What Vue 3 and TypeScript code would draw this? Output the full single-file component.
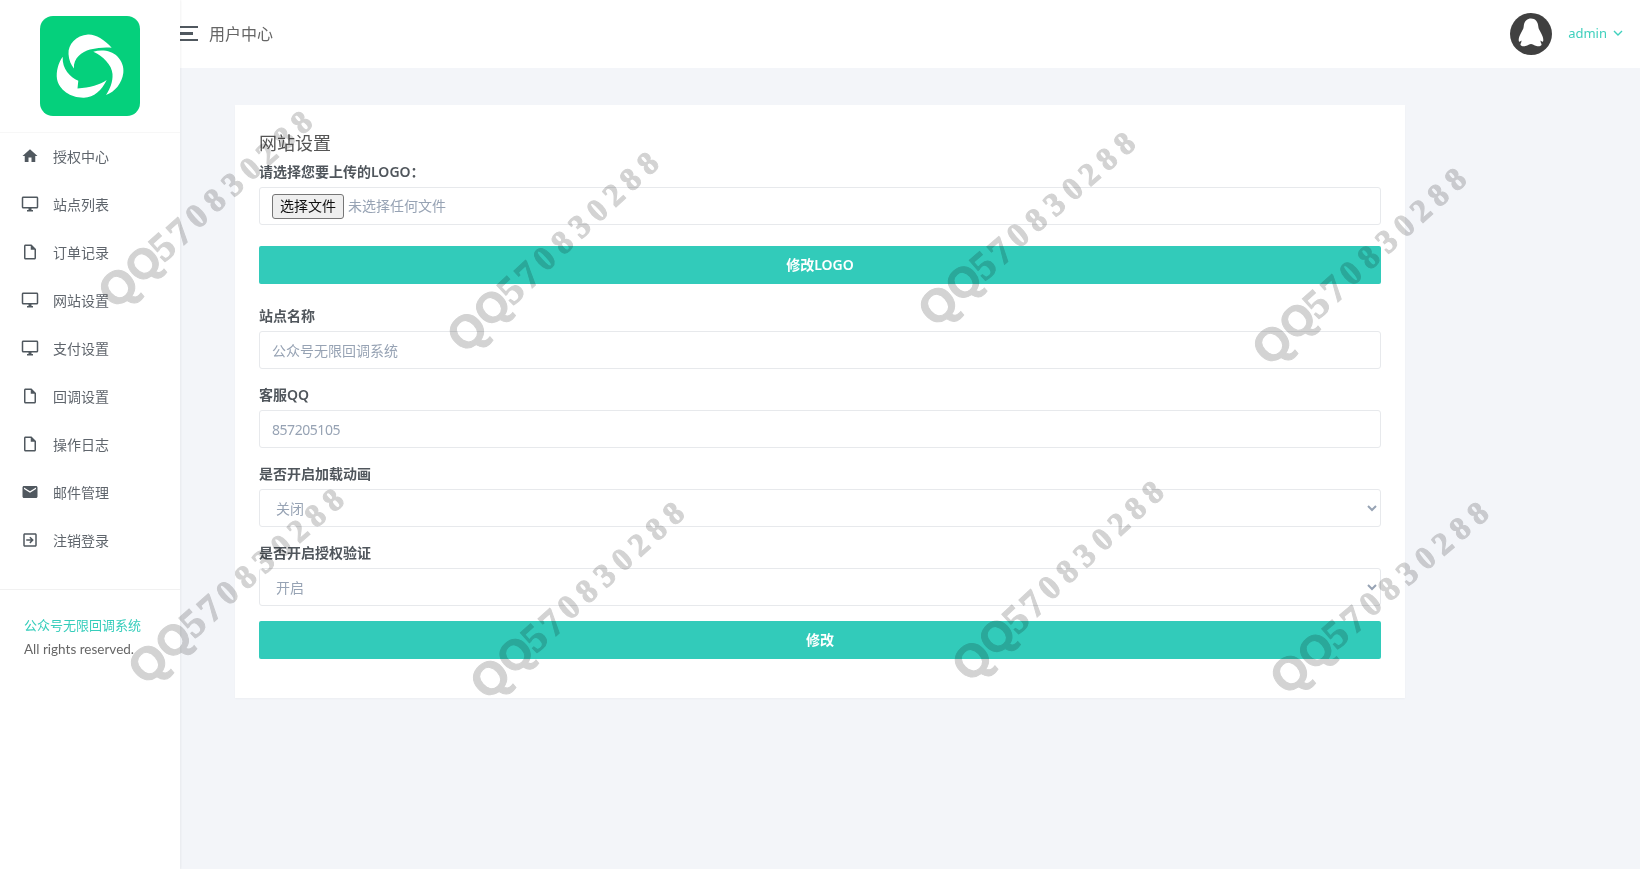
<template>
  <div class="page">
    <aside class="sidebar">
      <div class="logo-box">
        <svg class="logo" viewBox="0 0 100 100">
          <rect width="100" height="100" rx="13" fill="#05d07c" />
          <path fill="#fff" d="M71.7 31.7C64 23 55 18 48 18.5C36 19.5 28 28 28.5 38C28.8 44 31 49 34 52.5C33 42 42 36 50 33.5C58 31.5 66 31 71.7 31.7Z" />
          <path fill="#fff" d="M53.3 35.7C62 33 72 35 77 40C82 45 84 51 83.3 57C82 67 75 76 66 79C70 73 73 66 72.5 58C72 49 63 40 53.3 35.7Z" />
          <path fill="#fff" d="M22.7 40.7C18 47 16 56 17 63C19 74 31 82 44 81.7C54 81.5 62 74 66.7 64C60 69 50 71.5 37.5 72.5L38.3 64.7C30 61 22 53 22.7 40.7Z" />
        </svg>
      </div>
      <nav class="menu">
        <a v-for="item in menu" :key="item.label" class="menu-item">
          <svg class="menu-icon" viewBox="0 0 24 24"><path :d="icons[item.icon]" fill-rule="evenodd" /></svg>
          <span>{{ item.label }}</span>
        </a>
      </nav>
      <div class="side-foot">
        <p class="foot-name">公众号无限回调系统</p>
        <p class="foot-rights">All rights reserved.</p>
      </div>
    </aside>

    <div class="main">
      <header class="topbar">
        <div class="top-left">
          <span class="burger"><i></i><i class="short"></i><i></i></span>
          <span class="top-title">用户中心</span>
        </div>
        <div class="top-right">
          <svg class="avatar" viewBox="0 0 42 42">
            <circle cx="21" cy="21" r="21" fill="#404040" />
            <path fill="#fff" d="M21 5.5C25.5 5.5 28 9 28.3 13.5C28.5 16 29.5 17 31 20C33 23.5 33.8 27 33 28.5C32.5 29 31.5 28.5 30.5 27.5C30.5 29 31 30 31.5 31C32 33 29 33.5 26.5 33C24 32.5 22.5 31 21 31C19.5 31 18 32.5 15.5 33C13 33.5 10 33 10.5 31C11 30 11.5 29 11.5 27.5C10.5 28.5 9.5 29 9 28.5C8.2 27 9 23.5 11 20C12.5 17 13.5 16 13.7 13.5C14 9 16.5 5.5 21 5.5Z" />
          </svg>
          <span class="user">admin</span>
          <svg class="caret" viewBox="0 0 10 6"><path d="M1 1l4 4 4-4" fill="none" stroke="#3fd0bd" stroke-width="1.4" /></svg>
        </div>
      </header>

      <section class="content">
        <div class="card">
          <h4 class="card-title">网站设置</h4>
          <form @submit.prevent>
            <div class="group group-logo">
              <label>请选择您要上传的LOGO：</label>
              <div class="control file-box">
                <button type="button" class="file-btn">选择文件</button>
                <span class="file-none">未选择任何文件</span>
              </div>
            </div>
            <button type="button" class="submit submit-logo">修改LOGO</button>

            <div class="group">
              <label>站点名称</label>
              <input class="control" type="text" value="公众号无限回调系统" />
            </div>
            <div class="group">
              <label>客服QQ</label>
              <input class="control qq-input" type="text" value="857205105" />
            </div>
            <div class="group">
              <label>是否开启加载动画</label>
              <select class="control">
                <option>关闭</option>
                <option>开启</option>
              </select>
            </div>
            <div class="group">
              <label>是否开启授权验证</label>
              <select class="control">
                <option>开启</option>
                <option>关闭</option>
              </select>
            </div>
            <button type="button" class="submit submit-last">修改</button>
          </form>
        </div>
      </section>
    </div>

    <!-- 浮水印 -->
    <div
      v-for="(m, i) in marks"
      :key="i"
      class="mark"
      :style="{ left: m.x - 18 + 'px', top: m.y - 20 + 'px', transform: `rotate(${m.r}deg)` }"
    >
      <span
        v-for="(ch, j) in markChars"
        :key="j"
        :class="['mark-ch', { 'mark-q': ch.c === 'Q' }]"
        :style="{ width: ch.w + 'px', fontSize: ch.s + 'px' }"
      >{{ ch.c }}</span>
    </div>
  </div>
</template>

<script setup lang="ts">
const FILE = 'M14 2H6c-1.1 0-1.99.9-1.99 2L4 20c0 1.1.89 2 1.99 2H18c1.1 0 2-.9 2-2V8l-6-6zM6 20V4h7v5h5v11H6z';
const DESKTOP = 'M21 2H3c-1.1 0-2 .9-2 2v12c0 1.1.9 2 2 2h7v2H8v2h8v-2h-2v-2h7c1.1 0 2-.9 2-2V4c0-1.1-.9-2-2-2zM3 4h18v12H3z';

const icons: Record<string, string> = {
  home: 'M10 20v-6h4v6h5v-8h3L12 3 2 12h3v8z',
  desktop: DESKTOP,
  file: FILE,
  mail: 'M20 4H4c-1.1 0-2 .9-2 2v12c0 1.1.9 2 2 2h16c1.1 0 2-.9 2-2V6c0-1.1-.9-2-2-2zm0 4l-8 5-8-5V6l8 5 8-5v2z',
  exit: 'M5 3h14c1.1 0 2 .9 2 2v14c0 1.1-.9 2-2 2H5c-1.1 0-2-.9-2-2V5c0-1.1.9-2 2-2zM5 5v14h14V5zM12.5 7.5l4.5 4.5-4.5 4.5-1.4-1.4 2.1-2.1H7v-2h6.2l-2.1-2.1z',
};

const menu = [
  { label: '授权中心', icon: 'home' },
  { label: '站点列表', icon: 'desktop' },
  { label: '订单记录', icon: 'file' },
  { label: '网站设置', icon: 'desktop' },
  { label: '支付设置', icon: 'desktop' },
  { label: '回调设置', icon: 'file' },
  { label: '操作日志', icon: 'file' },
  { label: '邮件管理', icon: 'mail' },
  { label: '注销登录', icon: 'exit' },
];

// 第一個 Q 的中心座標與旋轉角度
const marks = [
  { x: 118, y: 287, r: -42 },
  { x: 467, y: 331, r: -43 },
  { x: 938, y: 305, r: -41 },
  { x: 1272, y: 344, r: -42 },
  { x: 148, y: 663, r: -41.5 },
  { x: 490, y: 678, r: -42 },
  { x: 972, y: 660, r: -43 },
  { x: 1290, y: 673, r: -40.5 },
];

const markChars = [
  { c: 'Q', s: 46, w: 36 },
  { c: 'Q', s: 42, w: 31 },
  { c: '5', s: 40, w: 22 },
  { c: '7', s: 38, w: 23 },
  { c: '0', s: 34, w: 24 },
  { c: '8', s: 33, w: 24 },
  { c: '3', s: 33, w: 24 },
  { c: '0', s: 32, w: 23 },
  { c: '2', s: 32, w: 22 },
  { c: '8', s: 32, w: 24 },
  { c: '8', s: 32, w: 23 },
];
</script>

<style>
body {
  background: #f3f5f9;
}
</style>

<style scoped>
.page {
  position: relative;
  display: flex;
  min-height: 869px;
  overflow: hidden;
  background: #f3f5f9;
  color: #5f656c;
  font-family: "Noto Sans", "Noto Sans CJK SC", sans-serif;
  font-size: 14px;
  line-height: 21px;
}

.sidebar {
  flex: 0 0 180px;
  background: #fff;
  box-shadow: 1px 0 2px rgba(0, 0, 0, 0.05);
  z-index: 1;
}

.logo-box {
  display: flex;
  justify-content: center;
  padding: 16px 0;
  border-bottom: 1px solid #f7f7f7;
}

.logo {
  width: 100px;
  height: 100px;
  display: block;
}

.menu {
  padding-bottom: 24px;
  border-bottom: 1px solid #f1f1f1;
}

.menu-item {
  display: flex;
  align-items: center;
  height: 48px;
  margin-top: -1px;
  margin-bottom: 1px;
  padding-left: 21px;
  color: #5f656c;
}

.menu-icon {
  width: 18px;
  height: 18px;
  margin-right: 14px;
  fill: #50585f;
}

.side-foot {
  padding: 24px 24px 0;
  font-size: 13px;
}

.side-foot p {
  margin: 0;
}

.foot-name {
  color: #36cdbb;
  line-height: 22px;
}

.foot-rights {
  margin-top: 1px !important;
  line-height: 24px;
  color: #666;
  font-family: Lato, "Noto Sans", sans-serif;
  font-size: 13.5px;
}

.main {
  flex: 1;
  min-width: 0;
}

.topbar {
  display: flex;
  justify-content: space-between;
  align-items: center;
  height: 68px;
  padding-right: 17px;
  background: #fff;
}

.top-left {
  display: flex;
  align-items: center;
}

.burger {
  display: flex;
  flex-direction: column;
  gap: 4px;
  width: 18px;
  margin-top: -1px;
}

.burger i {
  display: block;
  height: 2.5px;
  background: #50585f;
}

.burger .short {
  width: 13px;
}

.top-title {
  margin-left: 11px;
  font-size: 16px;
  color: #666;
}

.top-right {
  display: flex;
  align-items: center;
}

.avatar {
  width: 42px;
  height: 42px;
}

.user {
  margin-left: 16px;
  margin-top: -2px;
  color: #3fd0bd;
  font-size: 13px;
}

.caret {
  width: 10px;
  height: 6px;
  margin-left: 6px;
  margin-top: -3px;
}

.content {
  padding: 37px 0 0 55px;
}

.card {
  box-sizing: border-box;
  width: 1170px;
  padding: 24px;
  background: #fff;
  box-shadow: 0 1px 2px rgba(0, 0, 0, 0.03);
}

.card-title {
  margin: 0 0 3px;
  font-size: 18px;
  font-weight: 400;
  line-height: 29px;
  color: #555;
}

.group {
  margin-bottom: 15px;
}

.group-logo {
  margin-bottom: 21px;
}

label {
  display: block;
  margin-bottom: 5px;
  font-weight: 600;
  color: #50565c;
}

.control {
  display: block;
  box-sizing: border-box;
  width: 100%;
  height: 38px;
  padding: 0 12px;
  border: 1px solid #e7e9ec;
  border-radius: 3px;
  background: #fff;
  color: #97a3b4;
  font: inherit;
  outline: none;
}

.qq-input {
  letter-spacing: -0.45px;
}

.file-box {
  display: flex;
  align-items: center;
}

.file-btn {
  box-sizing: border-box;
  width: 72px;
  height: 25px;
  padding: 0 0 2px;
  border: 1px solid #767676;
  border-radius: 3px;
  background: #efefef;
  color: #111;
  font: inherit;
}

.file-none {
  margin-left: 4px;
  margin-top: -2px;
}

.submit {
  display: block;
  width: 100%;
  height: 38px;
  padding: 0 0 2px;
  border: none;
  border-radius: 2px;
  background: #32cbba;
  color: #fff;
  font: inherit;
  font-weight: 600;
}

.submit-logo {
  margin-bottom: 21px;
}

.submit-last {
  margin-bottom: 15px;
}

.mark {
  position: absolute;
  z-index: 5;
  display: flex;
  align-items: center;
  height: 40px;
  pointer-events: none;
  transform-origin: 18px 20px;
  mix-blend-mode: multiply;
  color: #d3d3d3;
  font-family: "Liberation Serif", serif;
  font-weight: 700;
  line-height: 40px;
  white-space: nowrap;
  -webkit-text-stroke: 1px #d3d3d3;
}

.mark-ch {
  flex: none;
  text-align: center;
}

.mark-q {
  font-family: "Liberation Sans", sans-serif;
}
</style>
